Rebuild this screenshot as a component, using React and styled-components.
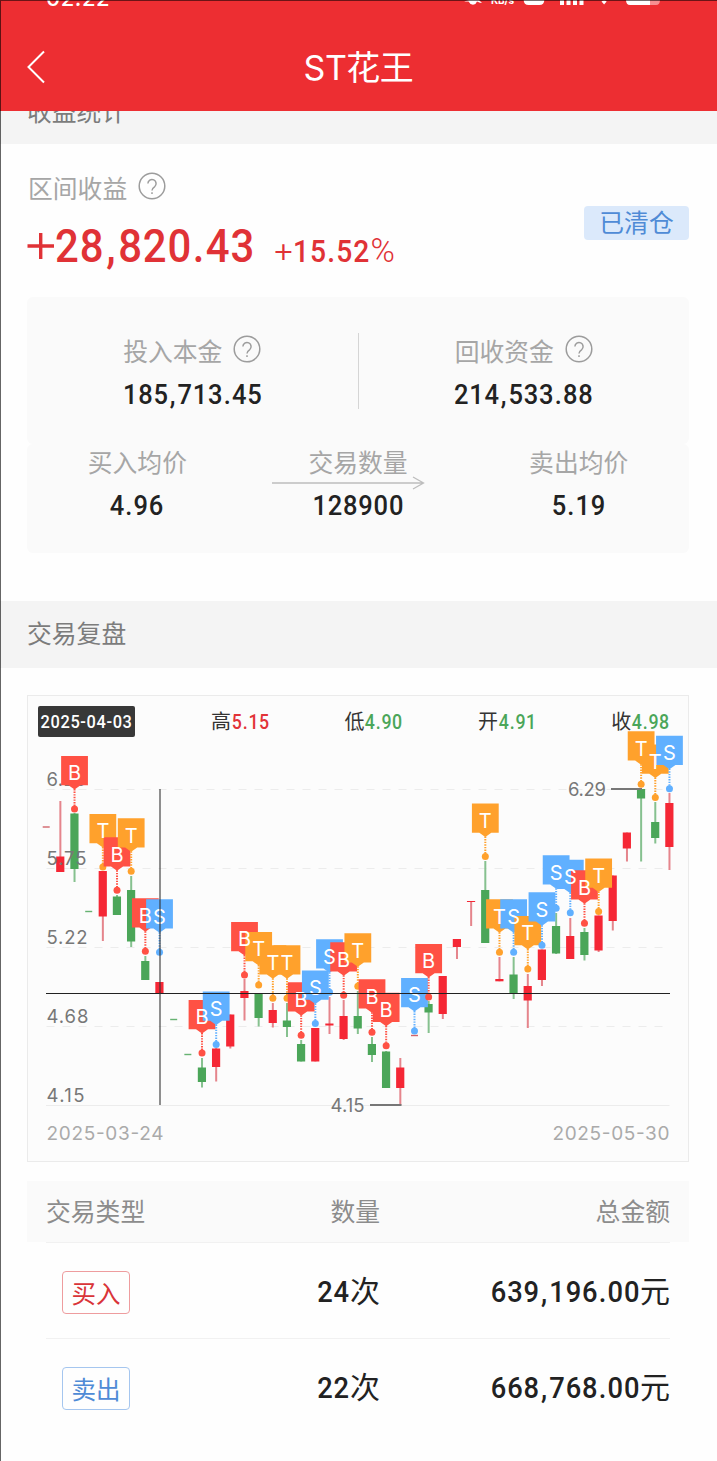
import React from "react";
import styled, { createGlobalStyle } from "styled-components";

const FIRST_X = 46.2;
const STEP = 14.165;
const xAt = index => FIRST_X + index * STEP;

const UP = "#f52735";
const DOWN = "#4ba659";
const MARK_COLORS = { B: "#ff5144", S: "#60b0ff", T: "#ffa12c" };

// [direction, high, body top, body bottom, low]
const candles = [
  ["flatUp", 827],
  ["up", 801, 856.5, 872, 872],
  ["down", 813, 813.5, 869, 882],
  ["flatDown", 911.5],
  ["up", 871, 871, 916.5, 941],
  ["down", 895, 896.5, 915, 915],
  ["down", 876, 890, 941.5, 947],
  ["down", 956, 961, 980, 980],
  ["up", 982, 982, 994, 994],
  ["flatDown", 1019.5],
  ["flatDown", 1054.5],
  ["down", 1058, 1067.5, 1082, 1087.5],
  ["up", 1048, 1048.5, 1067, 1081.5],
  ["up", 1014.5, 1014.5, 1046.5, 1048.5],
  ["up", 979, 991, 998, 1020.5],
  ["down", 993, 993, 1018, 1026.5],
  ["up", 1003, 1010, 1023, 1027.5],
  ["down", 1003, 1020.5, 1027, 1037],
  ["down", 1040, 1044, 1061.5, 1061.5],
  ["up", 1028, 1028, 1061.5, 1061.5],
  ["up", 997, 1023.5, 1025.5, 1034],
  ["up", 1000, 1016, 1039, 1040],
  ["down", 991, 1016, 1028.5, 1034],
  ["down", 1037, 1044, 1055, 1062],
  ["down", 1051, 1051.5, 1088, 1088],
  ["up", 1058, 1067.5, 1088, 1105],
  ["flatUp", 1035.5],
  ["down", 1001, 1004, 1012.5, 1033],
  ["up", 976, 976, 1014, 1019],
  ["up", 939, 939, 947, 959],
  ["up", 901, 901, 902, 926],
  ["down", 861, 890, 943, 943],
  ["up", 957, 979, 981.3, 981.3],
  ["down", 957, 974.5, 994, 999],
  ["up", 974, 986, 1000.5, 1028],
  ["up", 949.5, 949.5, 980, 986],
  ["down", 913, 926, 953.5, 954],
  ["up", 918, 936, 959, 959],
  ["down", 928, 932, 955, 960.5],
  ["up", 915.5, 915.5, 950.5, 952],
  ["up", 875.5, 875.5, 921, 930.5],
  ["up", 832.5, 832.5, 848.5, 861.5],
  ["down", 789, 789, 798.5, 861.5],
  ["down", 802, 822, 838, 843.5],
  ["up", 793, 803, 847, 870]
];

// [candle index, type, top]
const marks = [
  [2, "B", 756],
  [4, "T", 814],
  [5, "B", 837.3],
  [6, "T", 818.3],
  [7, "B", 898.3],
  [8, "S", 899.3],
  [11, "B", 1000],
  [12, "S", 991.5],
  [14, "B", 922],
  [15, "T", 932],
  [16, "T", 945.3],
  [17, "T", 945.3],
  [18, "B", 982.3],
  [19, "S", 970.5],
  [20, "S", 939.3],
  [21, "B", 942.3],
  [22, "T", 933.3],
  [23, "B", 979.3],
  [24, "B", 992.8],
  [26, "S", 978],
  [27, "B", 944],
  [31, "T", 803.5],
  [32, "T", 899.3],
  [33, "S", 899.3],
  [34, "T", 916],
  [35, "S", 892.3],
  [36, "S", 855.3],
  [37, "S", 859.7],
  [38, "B", 870.3],
  [39, "T", 858.5],
  [42, "T", 731.3],
  [43, "T", 744.5],
  [44, "S", 735.7]
];

const Candle = ({ index, data }) => {
  const [kind, high, top, bottom, low] = data;
  const x = xAt(index);
  if (kind.startsWith("flat")) {
    const color = kind === "flatUp" ? "#c94a52" : DOWN;
    return (
      <rect x={x - 3.5} y={high - 0.7} width="7" height="1.4" fill={color} opacity="0.85" />
    );
  }
  const color = kind === "up" ? UP : DOWN;
  const wick = kind === "up" ? "#e5858c" : "#86c18f";
  return (
    <g>
      <rect x={x - 1} y={high} width="2" height={low - high} fill={wick} />
      <rect x={x - 4.2} y={top} width="8.2" height={bottom - top} fill={color} />
    </g>
  );
};

const Mark = ({ index, type, top }) => {
  const x = xAt(index);
  const color = MARK_COLORS[type];
  return (
    <g>
      <path
        d={`M${x - 13.4} ${top}h26.8v29.3h-7.4l-6 4.2l-6 -4.2h-7.4z`}
        fill={color}
      />
      <path
        d={`M${x} ${top + 33}V${top + 50}`}
        stroke={color}
        strokeWidth="2"
        strokeDasharray="1.4 1.2"
      />
      <circle cx={x} cy={top + 53} r="3.5" fill={color} />
    </g>
  );
};

const CandleChart = () => (
  <ChartSvg viewBox="28 741 660 420">
    {[789.5, 868.5, 947.5, 1026.5].map(y => (
      <path key={y} d={`M46.5 ${y}H669`} stroke="#ececec" strokeDasharray="8 8" />
    ))}
    <path d="M46 1105.5H669.5" stroke="#ececec" />

    {candles.map((data, index) => (
      <Candle key={index} index={index} data={data} />
    ))}

    <AxisText x="46.5" y="785.5" textLength="40">6.29</AxisText>
    <AxisText x="46.5" y="864.5" textLength="40">5.75</AxisText>
    <AxisText x="46.5" y="944" textLength="41">5.22</AxisText>
    <AxisText x="46.5" y="1023" textLength="42">4.68</AxisText>
    <AxisText x="46.5" y="1102" textLength="38">4.15</AxisText>

    <AxisText x="568" y="796" textLength="38">6.29</AxisText>
    <path d="M611 789H642" stroke="#777" strokeWidth="2" />
    <AxisText x="330.5" y="1112" textLength="34">4.15</AxisText>
    <path d="M370 1105H401.5" stroke="#777" strokeWidth="2" />

    {marks.map(([index, type, top]) => (
      <Mark key={index} index={index} type={type} top={top} />
    ))}
    {marks.map(([index, type, top]) => (
      <MarkText key={index} x={xAt(index)} y={top + 24.3}>
        {type}
      </MarkText>
    ))}

    <path d="M46 993.5H670" stroke="#222" strokeWidth="1.1" />
    <path d="M160 789V1105" stroke="#333" strokeOpacity="0.55" strokeWidth="2" />

    <DateText x="46.5" y="1140" textLength="117">2025-03-24</DateText>
    <DateText x="552.5" y="1140" textLength="117">2025-05-30</DateText>
  </ChartSvg>
);

const Help = () => (
  <HelpIcon viewBox="0 0 28 28">
    <circle cx="14" cy="14" r="12.8" />
    <path d="M9.9 11.6a4.1 4.1 0 1 1 6.6 3.2c-1.6 1.1-2.5 1.8-2.5 3.6" />
    <path d="M14 20.2v1.7" />
  </HelpIcon>
);

const StatusIcons = () => (
  <StatusSvg viewBox="460 0 205 6">
    <path d="M464 1.5l5-1.5h10l3 3-2-.3-3-1.3q-1 3-4 3.4q-3-.3-4.5-3.3z" fill="#fff" />
    <text x="491" y="4.3" fontSize="10" fontWeight="700" fill="#fff" textLength="23">
      KB/s
    </text>
    <path d="M523.7 0h20.6q0 5-5 5h-10.6q-5 0-5-5z" fill="#fff" />
    <path d="M560 0h4v5h-4zM566.5 0h4v5h-4zM573 0h4v5h-4zM579.5 0h4v5h-4z" fill="#fff" />
    <path d="M601.5 1.5q2.6-2 5.2 0l-2.6 3z" fill="#fff" />
    <path d="M626 0h24v5h-20q-4 0-4-5z" fill="#fff" />
    <path d="M650 0h10q0 5-4 5h-6z" fill="#f78f91" />
  </StatusSvg>
);

// narrow figures, with a little more room round the separators
const Digits = ({ children, origin = "center", spacing = 0.031 }) => (
  <DigitRun $origin={origin} $spacing={spacing}>
    {children.split(/([.,])/).map((part, i) =>
      part === "," || part === "." ? (
        <Separator key={i} $pad={part === "," ? 0.045 : 0.015}>
          {part}
        </Separator>
      ) : (
        part
      )
    )}
  </DigitRun>
);

const Stat = ({ label, value, help = false }) => (
  <StatBlock>
    <Label>
      {label}
      {help && <Help />}
    </Label>
    <StatValue>
      <Digits>{value}</Digits>
    </StatValue>
  </StatBlock>
);

const quotes = [
  { name: "高", value: "5.15", color: "#e23338" },
  { name: "低", value: "4.90", color: "#4ba659" },
  { name: "开", value: "4.91", color: "#4ba659" },
  { name: "收", value: "4.98", color: "#4ba659" }
];

const trades = [
  { type: "买入", color: "#d93438", border: "#ee9c9e", count: "24", amount: "639,196.00" },
  { type: "卖出", color: "#4f8bd6", border: "#a5c6ef", count: "22", amount: "668,768.00" }
];

export default function App() {
  return (
    <Page>
      <GlobalStyle />
      <Header>
        <StatusBar>
          <Clock>02:22</Clock>
          <StatusIcons />
        </StatusBar>
        <NavBar>
          <BackIcon viewBox="0 0 20 34">
            <path d="M17 1.5L1.5 17l15.5 15.5" />
          </BackIcon>
          <Title>ST花王</Title>
        </NavBar>
      </Header>

      <ScrolledArea>
        <SectionBar $line={66}>收益统计</SectionBar>
      </ScrolledArea>

      <Summary>
        <div>
          <Label>
            区间收益
            <Help />
          </Label>
          <ProfitRow>
            <PlusIcon viewBox="0 0 28 28">
              <path d="M0.5 14H27M13.7 1V27" />
            </PlusIcon>
            <Profit>
              <Digits origin="left" spacing={0.02}>28,820.43</Digits>
            </Profit>
            <Rate>
              <Sign>+</Sign>
              <Digits origin="left">15.52</Digits>
              <Percent>%</Percent>
            </Rate>
          </ProfitRow>
        </div>
        <ClearedTag>已清仓</ClearedTag>
      </Summary>

      <Card $height={147} $top={34}>
        <Stat label="投入本金" value="185,713.45" help />
        <Divider />
        <Stat label="回收资金" value="214,533.88" help />
      </Card>
      <Card $height={109} $top={0}>
        <StatRow>
          <Stat label="买入均价" value="4.96" />
          <Stat label="交易数量" value="128900" />
          <Stat label="卖出均价" value="5.19" />
        </StatRow>
        <Arrow viewBox="0 0 154 16">
          <path d="M0 8H151M141 2L151.5 8L141 14" />
        </Arrow>
      </Card>

      <ReviewBar $line={63}>交易复盘</ReviewBar>

      <ChartPanel>
        <ChartHead>
          <DateTag>
            <DateRun>2025-04-03</DateRun>
          </DateTag>
          <Quotes>
            {quotes.map(q => (
              <Quote key={q.name}>
                {q.name}
                <QuoteValue $color={q.color}>
                  <Digits origin="right">{q.value}</Digits>
                </QuoteValue>
              </Quote>
            ))}
          </Quotes>
        </ChartHead>
        <CandleChart />
      </ChartPanel>

      <TableHead>
        <span>交易类型</span>
        <span>数量</span>
        <span>总金额</span>
      </TableHead>
      {trades.map(t => (
        <TradeRow key={t.type}>
          <TypeTag $color={t.color} $border={t.border}>
            {t.type}
          </TypeTag>
          <Amount>
            <Digits origin="right">{t.count}</Digits>
            <Unit>次</Unit>
          </Amount>
          <Amount>
            <Digits origin="right">{t.amount}</Digits>
            <Unit>元</Unit>
          </Amount>
        </TradeRow>
      ))}
    </Page>
  );
}

const GlobalStyle = createGlobalStyle`
  * {
    box-sizing: border-box;
  }

  body {
    margin: 0;
    background: #fff;
    font-family: "Noto Sans CJK SC", sans-serif;
    font-weight: 400;
  }
`;

const Page = styled.main`
  position: relative;
  width: 717px;
  height: 1461px;
  overflow: hidden;
  background: #fefefe;

  &::after {
    content: "";
    position: absolute;
    inset: 0;
    border-left: 1px solid rgba(0, 0, 0, 0.6);
    border-top: 1px solid rgba(0, 0, 0, 0.55);
    pointer-events: none;
  }
`;

const Header = styled.header`
  height: 111px;
  background: #ed2e32;
  color: #fff;
`;

const StatusBar = styled.div`
  height: 6px;
  padding: 0 52px 0 46px;
  display: flex;
  justify-content: space-between;
  align-items: flex-end;
  overflow: hidden;
`;

const Clock = styled.span`
  font-family: Inter, sans-serif;
  font-weight: 500;
  font-size: 22px;
  line-height: 22px;
  letter-spacing: 0.5px;
  margin-bottom: -3px;
`;

const StatusSvg = styled.svg`
  width: 205px;
  height: 6px;
  font-family: Inter, sans-serif;
`;

const NavBar = styled.div`
  height: 105px;
  padding: 18px 27px 0;
  display: grid;
  grid-template-columns: 60px 1fr 60px;
  align-items: center;
`;

const BackIcon = styled.svg`
  width: 20px;
  height: 34px;
  margin-top: -2px;
  fill: none;
  stroke: #fff;
  stroke-width: 2;
`;

const Title = styled.h1`
  margin: 0;
  padding-top: 1px;
  text-align: center;
  font-family: Inter, "Noto Sans CJK SC", sans-serif;
  font-size: 34px;
  font-weight: 400;
  line-height: 50px;
  letter-spacing: -0.5px;
`;

const ScrolledArea = styled.div`
  height: 33px;
  overflow: hidden;
  display: flex;
  align-items: flex-end;
`;

const SectionBar = styled.div`
  flex: none;
  width: 100%;
  height: 67px;
  padding: 0 27px;
  background: #f4f4f4;
  color: #7c7c7c;
  font-size: 24.8px;
  line-height: ${({ $line }) => $line}px;
`;

const ReviewBar = styled(SectionBar)`
  margin: 48px 0 27px;
`;

const Summary = styled.section`
  height: 153px;
  padding: 24px 28px 0;
  display: flex;
  justify-content: space-between;
`;

const Label = styled.div`
  display: flex;
  align-items: center;
  gap: 11px;
  height: 38px;
  color: #a6a6a6;
  font-size: 24.8px;
  line-height: 38px;
`;

const HelpIcon = styled.svg`
  width: 28px;
  height: 28px;
  margin-top: -2px;
  fill: none;
  stroke: #9c9c9c;
  stroke-width: 1.5;
`;

const DigitRun = styled.span`
  display: inline-block;
  letter-spacing: ${({ $spacing }) => $spacing}em;
  transform: scaleX(0.91);
  transform-origin: ${({ $origin }) => $origin};
`;

const Separator = styled.span`
  padding: 0 ${({ $pad }) => $pad}em;
`;

const ProfitRow = styled.div`
  display: flex;
  align-items: baseline;
  height: 60px;
  margin-top: 10px;
  color: #e03236;
  font-family: Roboto, sans-serif;
  font-weight: 500;
`;

const PlusIcon = styled.svg`
  align-self: flex-start;
  width: 28px;
  height: 28px;
  margin-top: 16px;
  margin-left: -1px;
  fill: none;
  stroke: currentColor;
  stroke-width: 3.4;
`;

const Sign = styled.span`
  font-family: Inter, sans-serif;
  font-weight: 300;
  font-size: 35px;
  line-height: 1;
  margin: 0 -2px 0 -4px;
`;

const Profit = styled.span`
  font-size: 46px;
  line-height: 60px;
`;

const Rate = styled.span`
  margin-left: 1px;
  font-size: 31px;
`;

const Percent = styled.span`
  margin-left: -7px;
  font-weight: 300;
  font-size: 33px;
`;

const ClearedTag = styled.span`
  width: 105px;
  height: 34px;
  margin-top: 38px;
  border-radius: 4px;
  background: #dbe9fb;
  color: #4f8bd6;
  font-size: 24.8px;
  line-height: 31px;
  text-align: center;
`;

const Card = styled.section`
  position: relative;
  display: flex;
  height: ${({ $height }) => $height}px;
  margin: 0 28px 0 27px;
  padding-top: ${({ $top }) => $top}px;
  border-radius: 6px;
  background: #fafafa;
`;

const StatRow = styled.div`
  flex: 1;
  display: flex;
  margin-top: -2px;
`;

const StatBlock = styled.div`
  flex: 1;
  display: flex;
  flex-direction: column;
  align-items: center;
`;

const StatValue = styled.strong`
  color: #222;
  font-family: Roboto, sans-serif;
  font-weight: 500;
  font-size: 28px;
  line-height: 34px;
  margin-top: 9px;
`;

const Divider = styled.div`
  width: 1px;
  height: 76px;
  margin-top: 2px;
  background: #d5d5d5;
`;

const Arrow = styled.svg`
  position: absolute;
  left: 245px;
  top: 31px;
  width: 154px;
  height: 16px;
  fill: none;
  stroke: #bdbdbd;
  stroke-width: 1.3;
`;

const ChartPanel = styled.section`
  height: 467px;
  margin: 0 28px 0 27px;
  border: 1px solid #ebebeb;
  background: #fcfcfc;
`;

const ChartHead = styled.div`
  display: flex;
  align-items: center;
  height: 45px;
  padding: 6px 18px 0 10px;
`;

const DateTag = styled.span`
  display: flex;
  justify-content: center;
  width: 97px;
  height: 31px;
  border-radius: 2px;
  background: #383838;
  color: #fff;
  font-family: Roboto, sans-serif;
  font-weight: 500;
  font-size: 18px;
  line-height: 32px;
`;

const DateRun = styled.span`
  flex: none;
  white-space: nowrap;
  letter-spacing: 0.7px;
  transform: scaleX(0.91);
`;

const Quotes = styled.div`
  flex: 1;
  display: flex;
  justify-content: space-between;
  margin-left: 76px;
`;

const Quote = styled.span`
  color: #333;
  font-size: 20px;
  line-height: 30px;
`;

const QuoteValue = styled.span`
  margin-left: -3px;
  color: ${({ $color }) => $color};
  font-family: Roboto, sans-serif;
  font-weight: 500;
  font-size: 19.5px;
`;

const ChartSvg = styled.svg`
  display: block;
  width: 660px;
  height: 420px;
  overflow: visible;
  fill: none;
`;

const AxisText = styled.text`
  fill: #777;
  font-family: Inter, sans-serif;
  font-weight: 400;
  font-size: 18.5px;
`;

const DateText = styled(AxisText)`
  fill: #aaa;
  font-size: 19px;
`;

const MarkText = styled.text`
  fill: #fff;
  font-family: Inter, sans-serif;
  font-weight: 400;
  font-size: 20px;
  text-anchor: middle;
`;

const TableHead = styled.div`
  display: grid;
  grid-template-columns: 200px 134px 1fr;
  height: 61px;
  margin: 19px 28px 0 27px;
  padding: 0 19px;
  background: #fafafa;
  color: #8c8c8c;
  font-size: 24.8px;
  line-height: 59px;

  span + span {
    text-align: right;
  }
`;

const TradeRow = styled.div`
  display: grid;
  grid-template-columns: 200px 134px 1fr;
  align-items: center;
  height: 96px;
  margin: 0 47px 0 46px;
  border-top: 1px solid #f1f1f1;
`;

const TypeTag = styled.span`
  width: 68px;
  height: 43px;
  margin: 3px 0 0 16px;
  border: 1.5px solid ${({ $border }) => $border};
  border-radius: 4px;
  color: ${({ $color }) => $color};
  font-size: 24.5px;
  line-height: 41px;
  text-align: center;
`;

const Amount = styled.span`
  color: #222;
  font-family: Roboto, sans-serif;
  font-weight: 500;
  font-size: 30px;
  line-height: 44px;
  text-align: right;
  white-space: nowrap;
`;

const Unit = styled.span`
  font-family: "Noto Sans CJK SC", sans-serif;
  font-weight: 400;
  font-size: 30px;
`;
